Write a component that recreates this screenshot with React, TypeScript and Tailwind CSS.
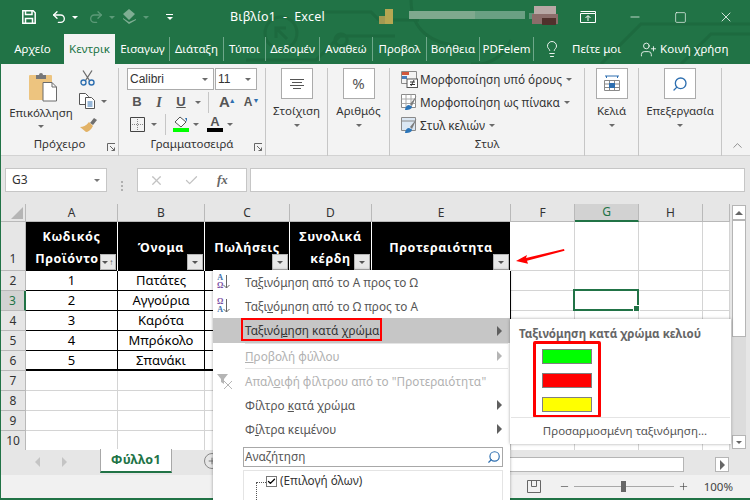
import type { ReactNode } from 'react'
import {
  Undo2, Redo2, Lightbulb, UserPlus, X, Minus, Square, Check, ChevronUp, Search, Plus,
} from 'lucide-react'

const font = 'font-["Noto_Sans","Open_Sans",sans-serif]'

function Caret({ className = 'border-t-[#6a6a6a]' }: { className?: string }) {
  return <span className={`inline-block w-0 h-0 border-x-[3.5px] border-x-transparent border-t-[3.5px] ${className}`} />
}

function TriRight({ color = 'border-l-[#5f5f5f]' }: { color?: string }) {
  return <span className={`inline-block w-0 h-0 border-y-[5px] border-y-transparent border-l-[5px] ${color}`} />
}

/* ---------- title bar ---------- */

const tabs = [
  { label: 'Εισαγωγ', w: 'w-[54px]' },
  { label: 'Διάταξη', w: 'w-[54px]' },
  { label: 'Τύποι', w: 'w-[42px]' },
  { label: 'Δεδομέν', w: 'w-[54px]' },
  { label: 'Αναθεώ', w: 'w-[53px]' },
  { label: 'Προβολ', w: 'w-[54px]' },
  { label: 'Βοήθεια', w: 'w-[53px]' },
  { label: 'PDFelem', w: 'w-[54px]' },
]

function TitleArt() {
  return (
    <svg className="absolute inset-0 pointer-events-none" width="750" height="64" viewBox="0 0 750 64" fill="none">
      <g stroke="#1d6a3f" strokeWidth="3">
        <circle cx="280" cy="33" r="16" />
        <path d="M275 38V28h10M276 29l10 10" />
        <path d="M245 60h70l24-24h55M322 12h48l8 8h40M340 34a6 6 0 1 0 0.1 0" />
        <path d="M510 40a38 38 0 0 1-40 24M410 0c0 30 20 44 50 46" />
        <path d="M600 64l40-40h110M680 64l30-30h40" />
      </g>
      <g>
        <rect x="378" y="16" width="10" height="8" fill="#a29a52" />
        <rect x="384" y="9" width="8" height="15" fill="#b6a752" />
        <rect x="408" y="11" width="66" height="8" fill="#7fa98e" />
        <rect x="474" y="11" width="50" height="8" fill="#6aa083" />
        <rect x="528" y="13" width="20" height="6" fill="#5d9478" />
        <rect x="533" y="6" width="22" height="10" fill="#b7a8a5" />
        <rect x="531" y="14" width="26" height="10" fill="#8b6d6a" />
        <rect x="541" y="18" width="14" height="7" fill="#50312c" />
      </g>
    </svg>
  )
}

function TitleBar() {
  return (
    <div className="relative bg-[#217346] h-[64px] shrink-0 text-white">
      <TitleArt />
      <div className="relative h-[34px] flex items-center">
        <div className="flex items-center w-[229px] pl-[21px]">
          <svg width="14" height="14" viewBox="0 0 14 14" fill="none" stroke="#fff" strokeWidth="1.5">
            <path d="M.8.8h10.4l2 2v10.4H.8z" />
            <path d="M3.5 1v3.5h6.500V1M3.5 13V8.5h7V13" />
          </svg>
          <Undo2 className="ml-[15px]" size={16} strokeWidth={2} />
          <span className="ml-[5px] flex"><Caret className="border-t-white" /></span>
          <Redo2 className="ml-[10px] text-[#5c9a78]" size={16} strokeWidth={2} />
          <span className="ml-[5px] flex"><Caret className="border-t-[#5c9a78]" /></span>
          <svg className="ml-[6px]" width="17" height="16" viewBox="0 0 17 16" fill="#7fae93">
            <path d="M8 0l6 5-6 6-6-6zM2 10l6 5 7-4v-1l-7 3-6-4z" />
          </svg>
          <span className="ml-[5px] flex"><Caret className="border-t-[#5c9a78]" /></span>
          <span className="ml-[17px] flex flex-col items-center gap-[2px]">
            <span className="w-[7px] h-px bg-white" />
            <Caret className="border-t-white" />
          </span>
        </div>
        <span className={`${font} text-[12.5px] tracking-[0.2px] whitespace-pre`}>Βιβλίο1  -  Excel</span>
        <div className="ml-auto flex items-center">
          <svg width="16" height="12" viewBox="0 0 16 12" fill="none" stroke="#fff">
            <path d="M.5 2.5h15v9H.5zM.5.5h15v2M8 10V5M5.5 7L8 4.500 10.500 7" />
          </svg>
          <Minus className="ml-[32px]" size={14} strokeWidth={1.2} />
          <Square className="ml-[32px]" size={13} strokeWidth={1.2} />
          <X className="ml-[31px] mr-[16px]" size={16} strokeWidth={1.2} />
        </div>
      </div>
      <div className={`relative h-[30px] flex items-end ${font} text-[11.5px]`}>
        <div className="w-[63px] h-[30px] flex items-center justify-center">Αρχείο</div>
        <div className="w-[51px] h-[30px] bg-[#f3f3f3] text-[#217346] flex items-center justify-center overflow-hidden whitespace-nowrap">Κεντρικ</div>
        <div className="flex pl-[1px]">
          {tabs.map((t) => (
            <div key={t.label} className={`${t.w} h-[24px] mb-[3px] border-r border-[#6ea88a] flex items-center justify-center whitespace-nowrap overflow-hidden`}>
              {t.label}
            </div>
          ))}
        </div>
        <div className="flex h-[30px] items-center">
          <Lightbulb className="ml-[9px]" size={18} strokeWidth={1.2} />
          <span className="ml-[11px] whitespace-nowrap">Πείτε μοι</span>
          <UserPlus className="ml-[19px]" size={17} strokeWidth={1.2} />
          <span className="ml-[3px] whitespace-nowrap">Κοινή χρήση</span>
        </div>
      </div>
    </div>
  )
}

/* ---------- ribbon ---------- */

function Group({ width, label, launcher, children }: { width: string; label?: string; launcher?: boolean; children: ReactNode }) {
  return (
    <div className={`${width} relative h-[88px] mt-[4px] border-r border-[#c6c6c6] flex flex-col shrink-0`}>
      <div className="flex-1 min-h-0">{children}</div>
      <div className="h-[20px] pb-[5px] flex items-center justify-center text-[11.5px] text-[#333]">{label}</div>
      {launcher && (
        <svg className="absolute right-[2px] bottom-[4px]" width="9" height="9" viewBox="0 0 9 9" fill="none" stroke="#666">
          <path d="M.5 8V.5H8M3 3l4.500 4.500M7.500 4.500v3h-3" />
        </svg>
      )}
    </div>
  )
}

function BigGroup({ width, label, children }: { width: string; label: string; children: ReactNode }) {
  return (
    <Group width={width}>
      <div className="flex flex-col items-center">
        <div className="w-[32px] h-[31px] bg-white border border-[#ababab] flex items-center justify-center">{children}</div>
        <span className="mt-[4px] h-[16px] leading-[16px] text-[11.5px] text-[#333] whitespace-nowrap">{label}</span>
        <span className="mt-[5px] flex"><Caret /></span>
      </div>
    </Group>
  )
}

function StyleIcon({ kind }: { kind: 'cond' | 'table' | 'cell' }) {
  return (
    <svg width="17" height="17" viewBox="0 0 17 17" fill="none">
      {kind === 'cond' ? (
        <>
          <path d="M.5.500h15v12H.5z" stroke="#8a8a8a" />
          <rect x="1" y="1" width="7" height="3" fill="#d2573c" />
          <rect x="1" y="5" width="5" height="3" fill="#4a7fbd" />
          <rect x="6" y="8" width="10.500" height="8.500" fill="#fff" stroke="#555" />
          <path d="M9 11h5M9 13.500h5M10 15l3-6" stroke="#333" />
        </>
      ) : (
        <>
          <path d="M.5.500h14v13H.5z" stroke="#8a8a8a" fill={kind === 'cell' ? '#dbe7f3' : '#fff'} />
          {kind === 'table' && <path d="M.5 5h14M.5 9.500h14M5 .5v13M10 .5v13" stroke="#a8a8a8" />}
          {kind === 'cell' && <path d="M.5 4h14" stroke="#8a8a8a" />}
          <path d="M15.500 2L9 10l2 2z" fill="#7c7c7c" />
          <path d="M4 16c0-3 2-5 4-5l3 1.500c0 2-2 3.500-7 3.500z" fill="#2c75b8" />
        </>
      )}
    </svg>
  )
}

function Ribbon() {
  return (
    <div className={`${font} h-[92px] shrink-0 bg-[#f3f3f3] border-b border-[#d2d2d2] flex text-[#333]`}>
      <Group width="w-[118px]" label="Πρόχειρο" launcher>
        <div className="flex">
          <div className="w-[74px] pl-[6px] flex flex-col items-center">
            <svg className="mt-[4px] ml-[3px]" width="30" height="30" viewBox="0 0 30 30">
              <rect x="1" y="3" width="23" height="25" rx="1" fill="#edc47f" />
              <path d="M8 3h3a2 2 0 0 1 4 0h3v4H8z" fill="#777" />
              <path d="M15 10.500h9l4.500 4.500v14H15z" fill="#fff" stroke="#6b6b6b" />
              <path d="M24 10.500V15h4.500" fill="none" stroke="#6b6b6b" />
            </svg>
            <span className="mt-[3px] text-[11.5px] leading-[16px]">Επικόλληση</span>
            <span className="mt-[4px] flex"><Caret /></span>
          </div>
          <div className="pl-[4px] flex flex-col">
            <svg className="mt-[2px] ml-[1px]" width="15" height="16" viewBox="0 0 15 16" fill="none">
              <path d="M3 .5l6.500 10M12 .5L5.500 10.500" stroke="#6b6b6b" strokeWidth="1.3" />
              <circle cx="3.500" cy="12.500" r="2.500" stroke="#2e6fb0" strokeWidth="1.4" />
              <circle cx="11.500" cy="12.500" r="2.500" stroke="#2e6fb0" strokeWidth="1.4" />
            </svg>
            <div className="mt-[7px] flex items-center gap-[5px]">
              <svg width="17" height="16" viewBox="0 0 17 16" fill="#fff" stroke="#555">
                <path d="M.5.500h6l3 3v8h-9z" />
                <path d="M6.500 4.500h6l3 3v8h-9z" />
                <path d="M8.500 9h5M8.500 11h5M8.500 13h5" stroke="#2e6fb0" />
              </svg>
              <Caret />
            </div>
            <svg className="mt-[8px] ml-[1px]" width="17" height="15" viewBox="0 0 17 15">
              <path d="M10 6l4-5 3 2-4 5z" fill="#6f6f6f" />
              <path d="M0 10c3 0 6-1 9-5l4 4c-2 4-5 6-7 6z" fill="#e2b266" />
            </svg>
          </div>
        </div>
      </Group>

      <Group width="w-[147px]" label="Γραμματοσειρά" launcher>
        <div className="pl-[8px]">
          <div className="flex gap-px">
            <div className="w-[87px] h-[22px] bg-white border border-[#ababab] flex items-center pl-[2px] pr-[5px] justify-between">
              <span className="font-['Liberation_Sans'] text-[12px]">Calibri</span>
              <Caret />
            </div>
            <div className="w-[42px] h-[22px] bg-white border border-[#ababab] flex items-center pl-[2px] pr-[5px] justify-between">
              <span className="font-['Liberation_Sans'] text-[12px]">11</span>
              <Caret />
            </div>
          </div>
          <div className="mt-[1px] h-[22px] flex items-center text-[#555]">
            <span className="w-[20px] text-center font-['Liberation_Sans'] font-bold text-[13px]">B</span>
            <span className="ml-[2px] w-[20px] text-center font-['Liberation_Serif'] italic font-bold text-[14px]">I</span>
            <span className="ml-[2px] w-[20px] text-center font-['Liberation_Sans'] font-bold text-[13px] underline">U</span>
            <span className="ml-[4px] flex"><Caret /></span>
            <span className="ml-[7px] w-px h-[21px] bg-[#c6c6c6]" />
            <span className="ml-[10px] font-['Liberation_Sans'] text-[15px] font-bold">A<sup className="text-[#2e6fb0] text-[7px] -ml-px">▲</sup></span>
            <span className="ml-[8px] font-['Liberation_Sans'] text-[12px] font-bold">A<sup className="text-[#2e6fb0] text-[7px]">▼</sup></span>
          </div>
          <div className="h-[22px] flex items-center">
            <svg className="ml-[3px]" width="15" height="15" viewBox="0 0 15 15" fill="none">
              <path d="M.5.500h14v14H.5z" stroke="#444" />
              <path d="M7.500 2v11M2 7.500h11" stroke="#888" strokeDasharray="1 1" />
            </svg>
            <span className="ml-[6px] flex"><Caret /></span>
            <span className="ml-[8px] w-px h-[21px] bg-[#c6c6c6]" />
            <span className="ml-[7px] w-[16px] flex flex-col items-center">
              <svg width="14" height="12" viewBox="0 0 14 12" fill="#fff" stroke="#555">
                <path d="M6 1l6 5-5 5-6-5z" />
                <path d="M11 2h2v4z" fill="#2e6fb0" stroke="none" />
              </svg>
              <span className="w-[16px] h-[4px] bg-[#00ff00]" />
            </span>
            <span className="ml-[4px] flex"><Caret /></span>
            <span className="ml-[8px] w-[16px] flex flex-col items-center leading-none">
              <span className="font-['Liberation_Sans'] font-bold text-[13px] text-[#555] h-[12px] leading-[12px]">A</span>
              <span className="w-[16px] h-[4px] bg-black" />
            </span>
            <span className="ml-[4px] flex"><Caret /></span>
          </div>
        </div>
      </Group>

      <BigGroup width="w-[62px]" label="Στοίχιση">
        <svg width="14" height="10" viewBox="0 0 14 10" stroke="#555"><path d="M0 .5h14M2 3.500h10M0 6.500h14M3 9.500h8" /></svg>
      </BigGroup>
      <BigGroup width="w-[62px]" label="Αριθμός">
        <span className="text-[15px] text-[#555]">%</span>
      </BigGroup>

      <Group width="w-[195px]" label="Στυλ">
        <div className="pl-[11px] flex flex-col text-[11.75px]">
          <div className="h-[23px] flex items-center gap-[2px]"><StyleIcon kind="cond" /><span className="whitespace-nowrap">Μορφοποίηση υπό όρους</span><span className="ml-[2px] flex"><Caret /></span></div>
          <div className="h-[23px] flex items-center gap-[2px]"><StyleIcon kind="table" /><span className="whitespace-nowrap">Μορφοποίηση ως πίνακα</span><span className="ml-[2px] flex"><Caret /></span></div>
          <div className="h-[23px] flex items-center gap-[2px]"><StyleIcon kind="cell" /><span className="whitespace-nowrap">Στυλ κελιών</span><span className="ml-[2px] flex"><Caret /></span></div>
        </div>
      </Group>

      <BigGroup width="w-[54px]" label="Κελιά">
        <svg width="16" height="18" viewBox="0 0 16 18" fill="none">
          <path d="M1 1h14M3 1l-1 1 1 1M13 1l1 1-1 1" stroke="#2e6fb0" />
          <path d="M.5 5.500h15v10H.5zM.5 9h15M.5 12.500h15M5.500 5.500v10M10.500 5.500v10" stroke="#8a8a8a" />
          <rect x="5" y="8" width="6" height="5" fill="#2e6fb0" />
        </svg>
      </BigGroup>
      <BigGroup width="w-[83px]" label="Επεξεργασία">
        <Search className="text-[#2e6fb0] -scale-x-100" size={16} strokeWidth={2} />
      </BigGroup>

      <div className="flex-1 flex items-end justify-end pb-[2px] pr-[5px]">
        <ChevronUp className="text-[#555]" size={15} strokeWidth={1} />
      </div>
    </div>
  )
}

/* ---------- formula bar ---------- */

function FormulaBar() {
  return (
    <div className="h-[48px] shrink-0 bg-[#e6e6e6] pt-[12px] pl-[4px] pr-[5px] flex">
      <div className="w-[102px] h-[24px] bg-white border border-[#c6c6c6] flex items-center justify-between pl-[6px] pr-[6px]">
        <span className={`${font} text-[12px] text-[#333]`}>G3</span>
        <Caret className="border-t-[#777]" />
      </div>
      <div className="w-[30px] flex items-center justify-center">
        <span className="w-[2px] h-[10px] border-l-2 border-dotted border-[#b0b0b0]" />
      </div>
      <div className="w-[110px] h-[24px] bg-white border border-[#c6c6c6] flex items-center">
        <X className="ml-[11px] text-[#c2c2c2]" size={15} strokeWidth={2} />
        <Check className="ml-[20px] text-[#c2c2c2]" size={15} strokeWidth={2} />
        <span className="ml-[18px] font-['Liberation_Serif'] italic font-bold text-[13px] text-[#666]">fx</span>
      </div>
      <div className="ml-[3px] flex-1 h-[24px] bg-white border border-[#c6c6c6]" />
    </div>
  )
}

/* ---------- sheet ---------- */

const colHeads = ['A', 'B', 'C', 'D', 'E', 'F', 'G', 'H']
const data: [string, string][] = [
  ['1', 'Πατάτες'],
  ['2', 'Αγγούρια'],
  ['3', 'Καρότα'],
  ['4', 'Μπρόκολο'],
  ['5', 'Σπανάκι'],
]

function FilterBtn({ sorted }: { sorted?: boolean }) {
  return (
    <span className="absolute right-[1px] bottom-[1px] w-[16px] h-[16px] bg-[#e8e8e8] border border-[#b5b5b5] flex items-center justify-center gap-[1px]">
      <Caret className="border-t-[#555]" />
      {sorted && <span className="text-[8px] leading-none text-[#555]">↑</span>}
    </span>
  )
}

function HeadCell({ children, sorted }: { children: ReactNode; sorted?: boolean }) {
  return (
    <div className="relative bg-black border-r border-white flex items-center justify-center text-center text-white font-bold text-[12.5px] tracking-[0.6px] leading-[22px] pt-[2px]">
      {children}
      <FilterBtn sorted={sorted} />
    </div>
  )
}

function Sheet() {
  const blankCols = ['F', 'G', 'H', 'x']
  return (
    <div className={`${font} flex-1 min-h-0 bg-[#e6e6e6] flex`}>
      <div className="grid grid-cols-[25px_92px_87px_85px_82px_139px_64px_64px_64px_27px] grid-rows-[18px_49px_20px_20px_20px_20px_20px_20px_20px_20px_20px] w-[729px] bg-white text-[13px] text-black">
        {/* header row */}
        <div className="bg-[#e6e6e6] border-r border-b border-[#b9b9b9] flex items-end justify-end p-[2px]">
          <span className="w-0 h-0 border-l-[12px] border-l-transparent border-b-[12px] border-b-[#b5b5b5]" />
        </div>
        {colHeads.map((c) => (
          <div key={c} className={`${c === 'G' ? 'bg-[#d2d2d2] text-[#217346] border-b-2 border-b-[#217346]' : 'bg-[#e6e6e6] text-[#333] border-b border-b-[#b9b9b9]'} border-r border-r-[#b9b9b9] flex items-center justify-center text-[12px]`}>{c}</div>
        ))}
        <div className="bg-[#e6e6e6] border-r border-b border-[#b9b9b9]" />

        {/* row 1 */}
        <div className="bg-[#e6e6e6] border-r border-b border-[#b9b9b9] flex items-end justify-center text-[12px] text-[#333] pb-[2px]">1</div>
        <HeadCell sorted><span className="whitespace-nowrap">Κωδικός<br /><span className="inline-block mr-[9px]">Προϊόντο</span></span></HeadCell>
        <HeadCell>Όνομα</HeadCell>
        <HeadCell><span className="whitespace-nowrap">Πωλήσεις</span></HeadCell>
        <HeadCell>Συνολικά<br />κέρδη</HeadCell>
        <HeadCell>Προτεραιότητα</HeadCell>
        {blankCols.map((c) => <div key={c} className="border-r border-b border-[#d4d4d4]" />)}

        {/* rows 2-6 */}
        {data.map(([id, name], i) => (
          <RowCells key={id} rowNo={i + 2} id={id} name={name} last={i === data.length - 1} />
        ))}

        {/* rows 7-10 */}
        {[7, 8, 9, 10].map((r) => (
          <BlankRow key={r} rowNo={r} />
        ))}
      </div>
      <div className="w-[21px] pl-[2px] pt-px pb-[1px] flex">
        <div className="w-[14px] bg-[#dcdcdc] flex flex-col">
          <div className="h-[15px] bg-white border border-[#b5b5b5] flex items-center justify-center"><span className="w-0 h-0 border-x-[4px] border-x-transparent border-b-[4px] border-b-[#666]" /></div>
          <div className="h-[117px] bg-white border border-[#b5b5b5]" />
          <div className="mt-auto h-[14px] bg-white border border-[#b5b5b5] flex items-center justify-center"><Caret className="border-t-[#666]" /></div>
        </div>
      </div>
    </div>
  )
}

function RowCells({ rowNo, id, name, last }: { rowNo: number; id: string; name: string; last: boolean }) {
  const active = rowNo === 3
  const bottom = last ? 'border-b-2' : 'border-b'
  return (
    <>
      <div className={`${active ? 'bg-[#d2d2d2] text-[#217346] border-r-2 border-r-[#217346]' : 'bg-[#e6e6e6] text-[#333] border-r border-r-[#b9b9b9]'} border-b border-b-[#b9b9b9] flex items-center justify-center text-[12px]`}>{rowNo}</div>
      <div className={`border-r ${bottom} border-black flex items-center justify-center pt-px`}>{id}</div>
      <div className={`border-r ${bottom} border-black flex items-center justify-center pt-px`}>{name}</div>
      <div className={`border-r ${bottom} border-black`} />
      <div className={`${bottom} border-black`} />
      <div className={`border-r ${bottom} border-black`} />
      <div className="border-r border-b border-[#d4d4d4]" />
      <div className="relative border-r border-b border-[#d4d4d4]">
        {active && (
          <span className="absolute -left-[2px] -top-[2px] w-[66px] h-[22px] border-2 border-[#217346]">
            <span className="absolute -right-[3px] -bottom-[3px] w-[5px] h-[5px] bg-[#217346] border border-white box-content" />
          </span>
        )}
      </div>
      <div className="border-r border-b border-[#d4d4d4]" />
      <div className="border-r border-b border-[#d4d4d4]" />
    </>
  )
}

function BlankRow({ rowNo }: { rowNo: number }) {
  return (
    <>
      <div className="bg-[#e6e6e6] border-r border-b border-[#b9b9b9] flex items-center justify-center text-[12px] text-[#333]">{rowNo}</div>
      {Array.from({ length: 9 }, (_, i) => (
        <div key={i} className="border-r border-b border-[#d4d4d4]" />
      ))}
    </>
  )
}

function TabBar() {
  return (
    <div className={`${font} h-[25px] shrink-0 bg-[#e6e6e6] flex items-start`}>
      <div className="w-[99px] h-[24px] flex items-center justify-center gap-[22px] text-[#c4c4c4]">
        <span className="w-0 h-0 border-y-[5px] border-y-transparent border-r-[5px] border-r-[#c4c4c4]" />
        <TriRight color="border-l-[#c4c4c4]" />
      </div>
      <div className="w-[72px] h-[24px] -mt-px bg-white border-x border-[#a8a8a8] border-b-2 border-b-[#217346] flex items-center justify-center font-bold text-[12.5px] text-[#217346] tracking-[0.3px]">Φύλλο1</div>
      <div className="ml-[32px] mt-[3px] w-[16px] h-[16px] rounded-full border border-[#888] flex items-center justify-center shrink-0"><Plus size={10} className="text-[#666]" /></div>
      <div className="ml-[100px] mt-[7px] flex-1 h-[15px] bg-white border border-[#b5b5b5] mr-[66px]" />
      <div className="absolute right-[21px] bottom-[28px] w-[14px] h-[15px] bg-white border border-[#b5b5b5] flex items-center justify-center"><TriRight color="border-l-[#666]" /></div>
    </div>
  )
}

function StatusBar() {
  return (
    <div className={`${font} flex-1 bg-[#f1f1f1] border-b-2 border-[#217346] flex items-center justify-end text-[12px] text-[#444]`}>
      <svg width="14" height="13" viewBox="0 0 14 13" fill="none" stroke="#666"><path d="M.5.500h13v12H.5zM4.500.5v6h5v-6" /></svg>
      <Minus className="ml-[18px]" size={11} strokeWidth={1.4} />
      <div className="ml-[4px] w-[100px] h-px bg-[#a8a8a8] relative">
        <span className="absolute left-[47px] -top-[5px] w-[5px] h-[11px] bg-[#666]" />
      </div>
      <Plus className="ml-[4px]" size={11} strokeWidth={1.4} />
      <span className="ml-[15px] mr-[17px] text-[11.5px]">100%</span>
    </div>
  )
}

/* ---------- filter menu ---------- */

function SortIcon({ top, bottom }: { top: string; bottom: string }) {
  return (
    <span className="w-[17px] h-[17px] flex items-center">
      <span className="flex flex-col items-center font-['Liberation_Serif'] font-bold text-[8px] leading-[8px]">
        <span className={top === 'A' ? 'text-[#3c6fa8]' : 'text-[#7a4fa3]'}>{top}</span>
        <span className={bottom === 'A' ? 'text-[#3c6fa8]' : 'text-[#7a4fa3]'}>{bottom}</span>
      </span>
      <svg width="7" height="14" viewBox="0 0 7 14" fill="none" stroke="#666"><path d="M3.500 0v13M.5 10l3 3 3-3" /></svg>
    </span>
  )
}

function MenuRow({ icon, children, arrow, disabled, selected, h = 'h-[24px]' }: { icon?: ReactNode; children: ReactNode; arrow?: boolean; disabled?: boolean; selected?: boolean; h?: string }) {
  return (
    <div className={`${h} flex items-center pr-[8px] ${selected ? 'bg-[#c6c6c6] text-[#333]' : disabled ? 'text-[#b1b1b1]' : 'text-[#555]'}`}>
      <span className="w-[32px] pl-[4px] flex items-center">{icon}</span>
      <span className="whitespace-nowrap pt-px">{children}</span>
      {arrow && <span className="ml-auto flex"><TriRight color={disabled ? 'border-l-[#b5b5b5]' : 'border-l-[#5f5f5f]'} /></span>}
    </div>
  )
}

function FilterMenu() {
  return (
    <div className={`${font} absolute left-[212px] top-[270px] w-[297px] h-[230px] bg-white shadow-[0_0_3px_rgba(0,0,0,0.35)] text-[11.75px]`}>
      <MenuRow icon={<SortIcon top="A" bottom="Ω" />}>Τα<u>ξ</u>ινόμηση από το Α προς το Ω</MenuRow>
      <MenuRow icon={<SortIcon top="Ω" bottom="A" />}>Ταξι<u>ν</u>όμηση από το Ω προς το Α</MenuRow>
      <div className="relative">
        <MenuRow arrow selected h="h-[25px]">Ταξινό<u>μ</u>ηση κατά χρώμα</MenuRow>
        <span className="absolute left-[28px] top-0 w-[141px] h-[23px] border-2 border-[#ff0000]" />
      </div>
      <div className="h-[1px] bg-[#e4e4e4] ml-[32px] mr-[2px]" />
      <MenuRow arrow disabled><u>Π</u>ροβολή φύλλου</MenuRow>
      <div className="h-[1px] bg-[#e4e4e4] ml-[32px] mr-[2px]" />
      <MenuRow
        disabled
        icon={
          <svg width="17" height="17" viewBox="0 0 17 17" fill="none">
            <path d="M0 1h11L7 6v5L4 9V6z" fill="#b5b5b5" />
            <path d="M7 8l8 8M15 8l-8 8" stroke="#b5b5b5" />
          </svg>
        }
      >
        Απαλ<u>ο</u>ιφή φίλτρου από το "Προτεραιότητα"
      </MenuRow>
      <MenuRow arrow>Φίλτρο <u>κ</u>ατά χρώμα</MenuRow>
      <MenuRow arrow>Φ<u>ί</u>λτρα κειμένου</MenuRow>
      <div className="mt-[6px] ml-[30px] mr-[7px] h-[20px] border border-[#a8a8a8] flex items-center justify-between px-[1px] text-[#555]">
        <span>Αναζήτηση</span>
        <Search className="text-[#2e6fb0] -scale-x-100" size={14} strokeWidth={2} />
      </div>
      <div className="mt-[3px] ml-[30px] mr-[7px] h-[40px] border border-[#e4e4e4] flex items-start pt-[1px]">
        <span className="ml-[12px] mt-[10px] w-[10px] h-[30px] border-t border-l border-dotted border-[#555]" />
        <span className="w-[11px] h-[11px] mt-[4px] border border-[#777] flex items-center justify-center">
          <Check size={11} strokeWidth={3.5} className="text-black" />
        </span>
        <span className="ml-[3px] text-[#333]">(Επιλογή όλων)</span>
      </div>
    </div>
  )
}

function SortSubmenu() {
  return (
    <div className={`${font} absolute left-[509px] top-[319px] w-[221px] h-[125px] bg-white shadow-[0_0_3px_rgba(0,0,0,0.35)] text-[#666]`}>
      <div className="pl-[9px] pt-[6px] h-[22px] font-bold text-[11.5px] whitespace-nowrap">Ταξινόμηση κατά χρώμα κελιού</div>
      <div className="ml-[23px] w-[68px] h-[77px] border-[3px] border-[#ff0000] rounded-[2px] flex flex-col items-center pt-[5px] gap-[9px]">
        <span className="w-[50px] h-[15px] bg-[#00ff00] border border-[#808080]" />
        <span className="w-[50px] h-[15px] bg-[#ff0000] border border-[#808080]" />
        <span className="w-[50px] h-[15px] bg-[#ffff00] border border-[#808080]" />
      </div>
      <div className="-mt-px mx-[1px] h-px bg-[#e4e4e4]" />
      <div className="h-[26px] flex items-center justify-center pl-[9px] text-[11.5px] text-[#555]">Προσαρμοσμένη ταξινόμηση...</div>
    </div>
  )
}

export default function App() {
  return (
    <div className="relative w-[750px] h-[500px] overflow-hidden bg-[#e6e6e6] flex flex-col border-l border-[#217346]">
      <TitleBar />
      <Ribbon />
      <FormulaBar />
      <div className="h-[246px] shrink-0 flex"><Sheet /></div>
      <TabBar />
      <StatusBar />
      <FilterMenu />
      <SortSubmenu />
      <svg className="absolute left-[514px] top-[245px]" width="52" height="20" viewBox="0 0 52 20" fill="#ff0000">
        <path d="M1 16l11-6-1 3 38-9 .5 1.800-37.500 10 1 3z" />
      </svg>
    </div>
  )
}
